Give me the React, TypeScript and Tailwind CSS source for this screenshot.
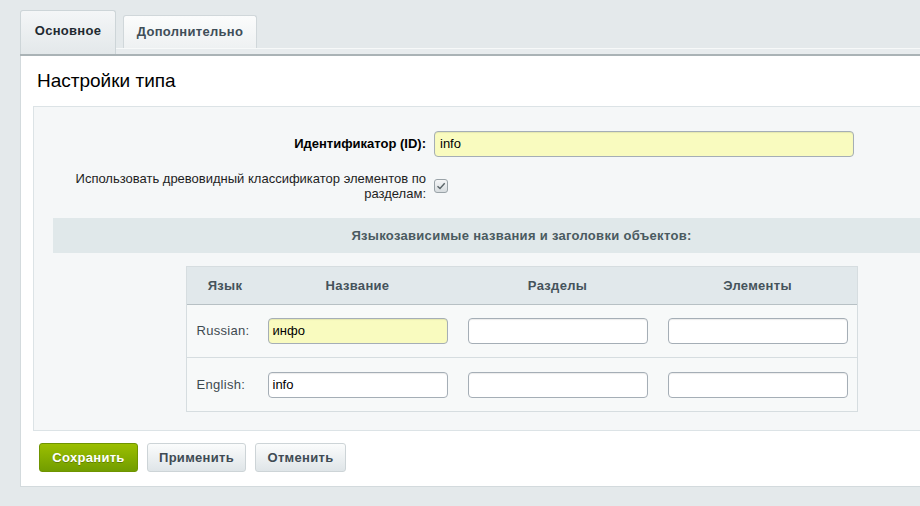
import * as React from "react"

const LANGS = [
  { label: "Russian:", name: "инфо", highlight: true },
  { label: "English:", name: "info", highlight: false },
]

function TextInput({ value, highlight }: { value?: string; highlight?: boolean }) {
  return (
    <div
      className={
        "flex h-[26px] w-[180px] items-center rounded-[4px] border border-[#a5aeb6] px-[4px] text-[13px] text-black shadow-[inset_0_1px_1px_rgba(0,0,0,0.08)] " +
        (highlight ? "bg-[#f9fbbf]" : "bg-white")
      }
    >
      {value}
    </div>
  )
}

export default function App() {
  return (
    <div className="h-[506px] w-[920px] overflow-hidden bg-[#e4e9eb] pt-[10px] pl-[20px] font-['Liberation_Sans',Arial,sans-serif] text-[13px]">
      <div className="w-[990px]">
        {/* tabs */}
        <div className="flex h-[38px] items-end gap-[7px]">
          <div className="relative z-10 -mb-[6px] flex h-[44px] w-[96px] items-center justify-center rounded-t-[3px] border border-b-0 border-[#cdd5d8] bg-gradient-to-b from-[#f4f6f7] to-[#e3e8ea] pb-[4px] text-[13px] font-bold tracking-[0.3px] text-[#1f2a30]">
            Основное
          </div>
          <div className="flex h-[33px] w-[134px] items-center justify-center rounded-t-[3px] border border-b-0 border-[#d0d7da] bg-gradient-to-b from-[#fbfcfc] to-[#eef1f2] text-[13px] font-bold tracking-[0.3px] text-[#3f4e58]">
            Дополнительно
          </div>
        </div>
        <div className="h-[8px] border-t border-[#f7f9f9] border-b-2 border-b-[#aab3b6] bg-[#e8ecee]" />

        {/* panel */}
        <div className="border-l border-b border-[#d3dadd] bg-white pl-[12px] pb-[14px]">
          <h1 className="flex h-[50px] items-center pl-[4px] pt-[1px] text-[19px] font-normal text-black">
            Настройки типа
          </h1>

          <div className="border border-[#dce3e6] bg-[#f5f7f8] pt-[24px] pb-[17px] pl-[19px] pr-[19px]">
            <div className="grid grid-cols-[373px_1fr] items-center gap-x-[8px]">
              <div className="text-right font-bold text-black">Идентификатор (ID):</div>
              <div className="flex h-[26px] w-[420px] items-center rounded-[4px] border border-[#a5aeb6] bg-[#f9fbbf] px-[5px] text-black shadow-[inset_0_1px_1px_rgba(0,0,0,0.08)]">
                info
              </div>

              <div className="mt-[14px] text-right leading-[15px] text-[#1e1e1e]">
                Использовать древовидный классификатор элементов по
                <br />
                разделам:
              </div>
              <div className="mt-[14px]">
                <div className="flex h-[14px] w-[14px] items-center justify-center rounded-[3px] border border-[#9aa3a8] bg-gradient-to-b from-[#f5f6f7] to-[#d7dcdf]">
                  <svg width="10" height="8" viewBox="0 0 10 8">
                    <path d="M1.5 4.2 L4 6.5 L8.7 1.3" fill="none" stroke="#5a6468" strokeWidth="1.4" />
                  </svg>
                </div>
              </div>
            </div>

            <div className="mt-[17px] flex h-[35px] items-center justify-center bg-[#e0e8ea] text-[13px] font-bold tracking-[0.3px] text-[#4a5a60]">
              Языкозависимые названия и заголовки объектов:
            </div>

            <div className="mx-auto mt-[13px] mb-[1px] w-[672px] border border-[#d6dde0] bg-[#f7f9f9]">
              <div className="grid h-[38px] grid-cols-[71px_200px_200px_200px] items-center border-b border-[#b7c0c4] bg-[#e1e8eb] font-bold tracking-[0.3px] text-[#45535b]">
                <div className="pl-[6px] text-center">Язык</div>
                <div className="text-center">Название</div>
                <div className="text-center">Разделы</div>
                <div className="text-center">Элементы</div>
              </div>
              {LANGS.map((lang, i) => (
                <div
                  key={lang.label}
                  className={
                    "grid h-[53px] grid-cols-[71px_200px_200px_200px] items-center " +
                    (i === 0 ? "border-b border-[#d6dde0]" : "")
                  }
                >
                  <div className="pl-[10px] tracking-[0.3px] text-[#3e4a50]">{lang.label}</div>
                  <div className="pl-[10px]">
                    <TextInput value={lang.name} highlight={lang.highlight} />
                  </div>
                  <div className="pl-[10px]">
                    <TextInput />
                  </div>
                  <div className="pl-[10px]">
                    <TextInput />
                  </div>
                </div>
              ))}
            </div>
          </div>

          <div className="mt-[12px] flex gap-[9px] pl-[6px]">
            <button className="h-[29px] w-[99px] rounded-[3px] border border-[#6f9400] bg-gradient-to-b from-[#9bbf00] to-[#729d00] font-bold tracking-[0.3px] text-white [text-shadow:0_1px_0_rgba(0,0,0,0.25)]">
              Сохранить
            </button>
            <button className="h-[29px] w-[99px] rounded-[3px] border border-[#cdd4d7] bg-gradient-to-b from-[#fbfcfc] to-[#dfe5e8] font-bold tracking-[0.3px] text-[#3f4b54]">
              Применить
            </button>
            <button className="h-[29px] w-[91px] rounded-[3px] border border-[#cdd4d7] bg-gradient-to-b from-[#fbfcfc] to-[#dfe5e8] font-bold tracking-[0.3px] text-[#3f4b54]">
              Отменить
            </button>
          </div>
        </div>
      </div>
    </div>
  )
}
